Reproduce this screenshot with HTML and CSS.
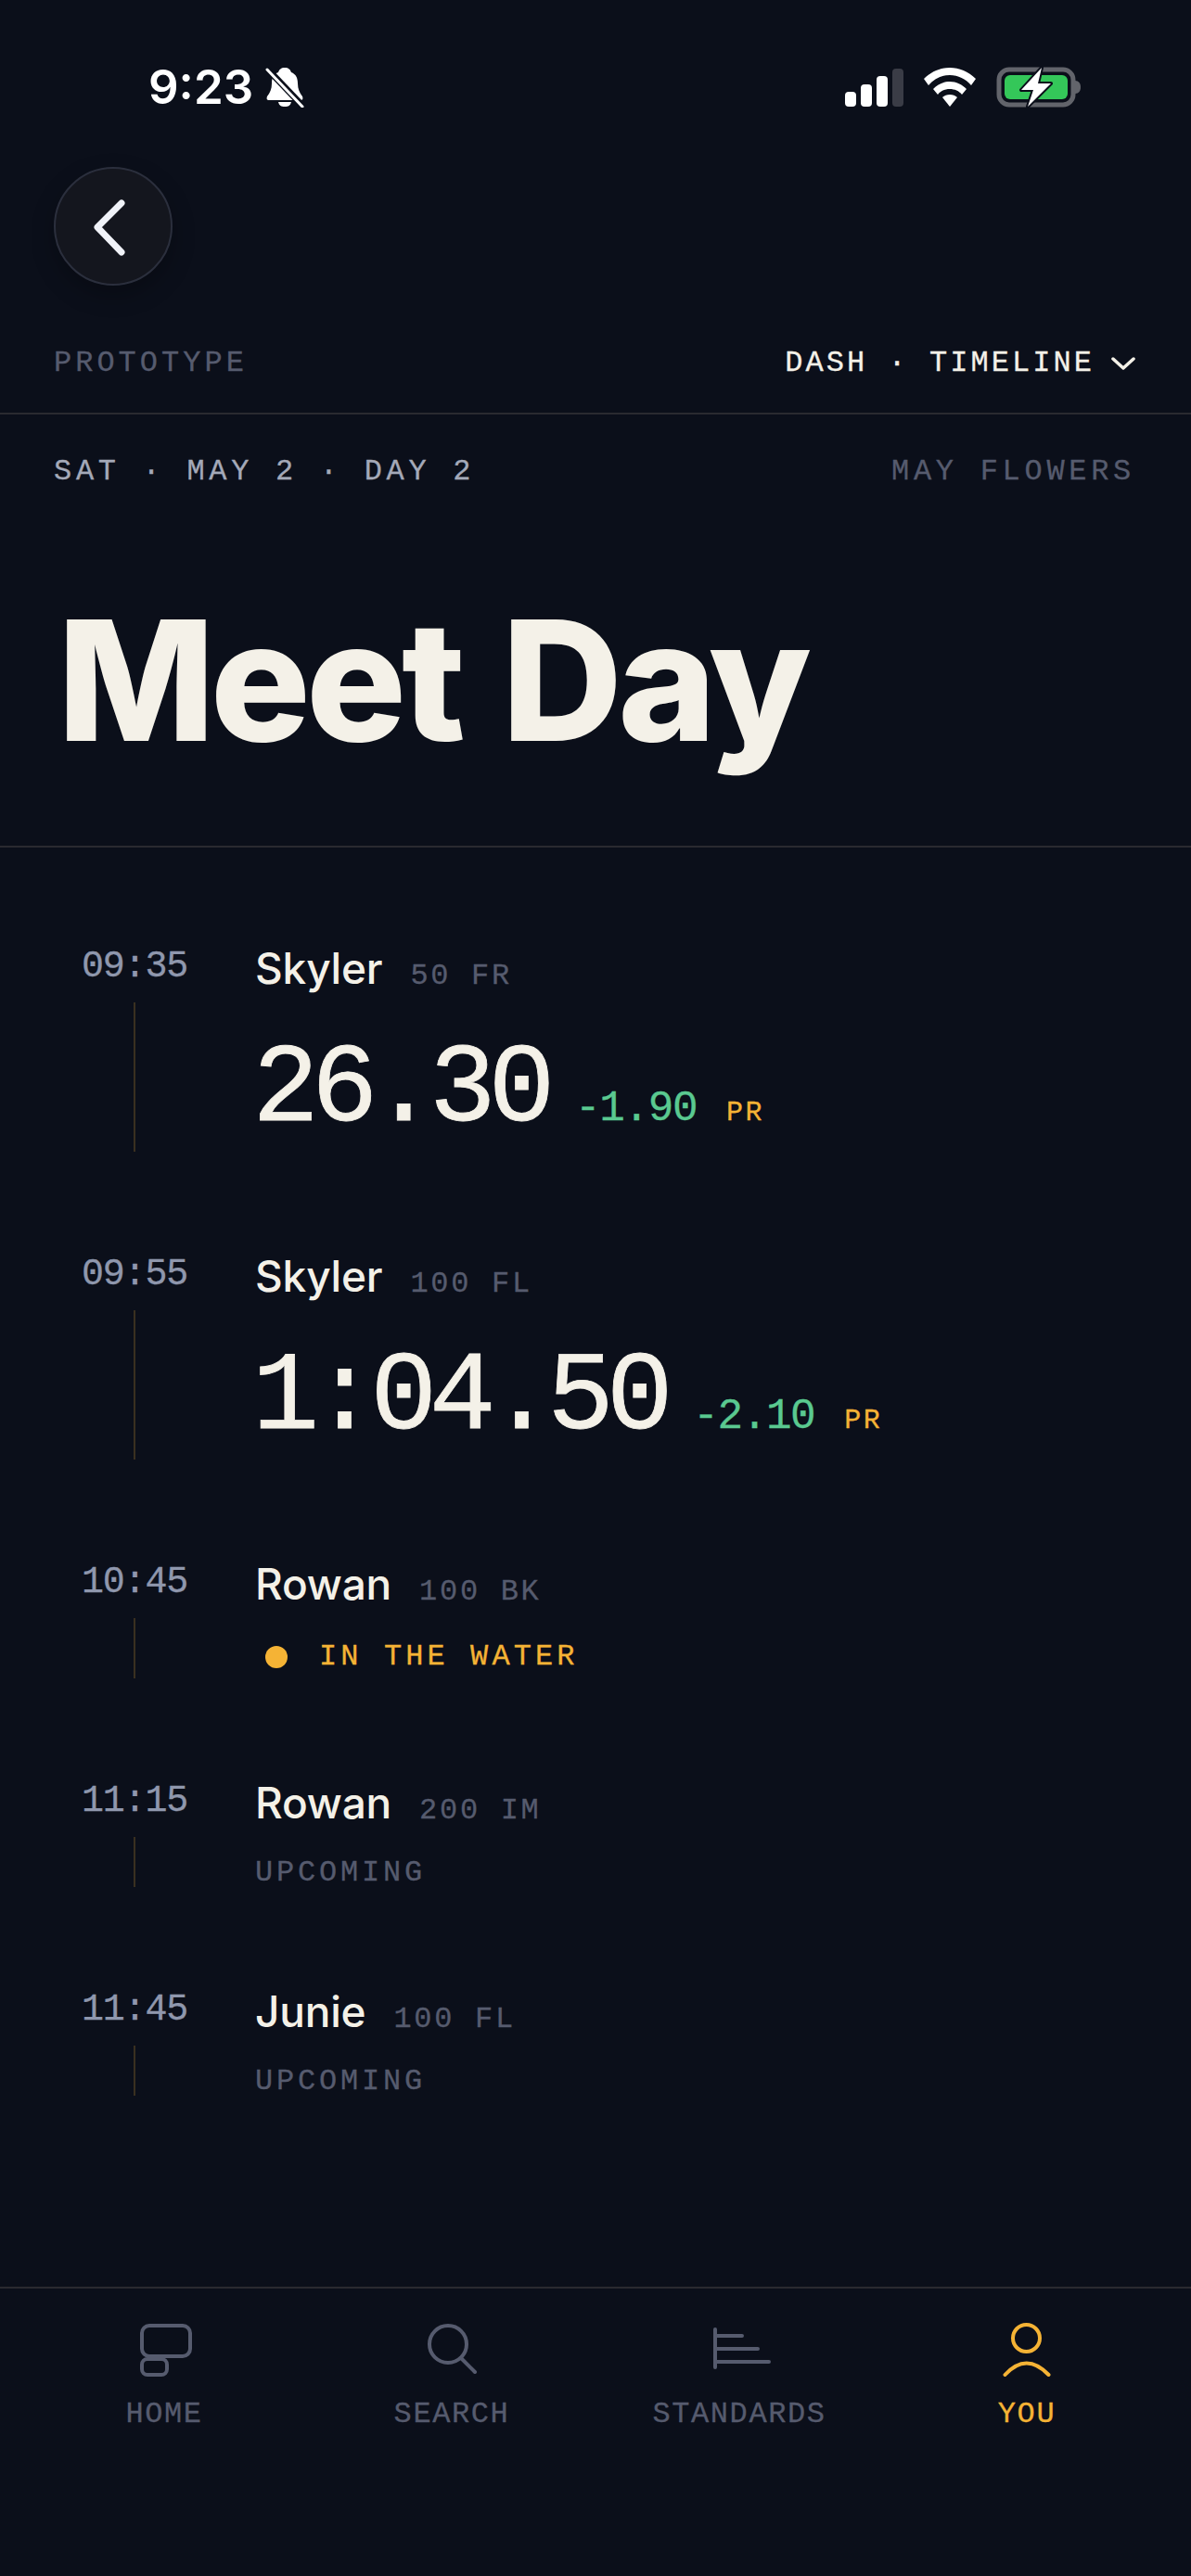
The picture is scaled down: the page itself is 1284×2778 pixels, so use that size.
FILE: index.html
```html
<!DOCTYPE html>
<html lang="en">
<head>
<meta charset="utf-8">
<title>Meet Day</title>
<link rel="stylesheet" href="styles.css">
</head>
<body>
<div class="app">
  <div class="status">
    <div class="status-left">
      <span class="clock">9:23</span>
      <svg class="bell" width="42" height="44" viewBox="0 0 42 44"><path class="white" d="M21 1c4 0 6 2 7 5 5 2 7 6 7 12 0 6 2 10 5 14 1 3 0 4-2 4H4c-2 0-3-1-2-4 3-4 5-8 5-14 0-6 2-10 7-12 1-3 3-5 7-5z"/><path class="white" d="M14 38h14c-1 4-3 5-7 5s-6-1-7-5z"/><path class="bell-cut" d="M1 1l40 42"/><path class="bell-slash" d="M2 3l38 40"/></svg>
    </div>
    <div class="status-right">
      <div class="signal">
        <span class="bar b1"></span><span class="bar b2"></span><span class="bar b3"></span><span class="bar b4"></span>
      </div>
      <svg class="wifi" width="56" height="42" viewBox="0 0 56 42"><path class="white" d="M28 0c10 0 20 4 28 12l-5 7C45 12 37 8 28 8S11 12 5 19l-5-7C8 4 18 0 28 0z"/><path class="white" d="M28 15c7 0 13 3 18 8l-5 6c-3-4-8-6-13-6s-10 2-13 6l-5-6c5-5 11-8 18-8z"/><path class="white" d="M28 29c3 0 6 1 8 3L28 42 20 32c2-2 5-3 8-3z"/></svg>
      <svg class="battery" width="92" height="44" viewBox="0 0 92 44"><rect class="bat-frame" x="3" y="3" width="80" height="38" rx="11"/><rect class="bat-fill" x="9" y="9" width="68" height="26" rx="6"/><path class="bat-nub" d="M85 15c4 0 6 3 6 7s-2 7-6 7z"/><path class="bat-bolt" d="M49 1L27 25h13l-6 18 25-25H45z"/></svg>
    </div>
  </div>

  <button class="back" type="button" aria-label="Back">
    <svg width="40" height="64" viewBox="0 0 40 64"><path d="M33 7L7 33l26 27" /></svg>
  </button>

  <div class="topbar">
    <span class="proto">PROTOTYPE</span>
    <span class="crumb"><span>DASH · TIMELINE</span><svg width="26" height="14" viewBox="0 0 26 14"><path d="M2 2l11 10L24 2"/></svg></span>
  </div>

  <header class="hero">
    <div class="dateline">
      <span class="date">SAT · MAY 2 · DAY 2</span>
      <span class="meet-name">MAY FLOWERS</span>
    </div>
    <h1 class="title">Meet Day</h1>
  </header>

  <main class="timeline">
    <article class="row">
      <div class="when"><span class="time">09:35</span><span class="line"></span></div>
      <div class="body">
        <div class="who"><span class="name">Skyler</span><span class="event">50 FR</span></div>
        <div class="result"><span class="mark">26.30</span><span class="delta">-1.90</span><span class="pr">PR</span></div>
      </div>
    </article>
    <article class="row">
      <div class="when"><span class="time">09:55</span><span class="line"></span></div>
      <div class="body">
        <div class="who"><span class="name">Skyler</span><span class="event">100 FL</span></div>
        <div class="result"><span class="mark">1:04.50</span><span class="delta">-2.10</span><span class="pr">PR</span></div>
      </div>
    </article>
    <article class="row">
      <div class="when"><span class="time">10:45</span><span class="line"></span></div>
      <div class="body">
        <div class="who"><span class="name">Rowan</span><span class="event">100 BK</span></div>
        <div class="live"><span class="dot"></span>IN THE WATER</div>
      </div>
    </article>
    <article class="row">
      <div class="when"><span class="time">11:15</span><span class="line"></span></div>
      <div class="body">
        <div class="who"><span class="name">Rowan</span><span class="event">200 IM</span></div>
        <div class="upcoming">UPCOMING</div>
      </div>
    </article>
    <article class="row">
      <div class="when"><span class="time">11:45</span><span class="line"></span></div>
      <div class="body">
        <div class="who"><span class="name">Junie</span><span class="event">100 FL</span></div>
        <div class="upcoming">UPCOMING</div>
      </div>
    </article>
  </main>

  <nav class="tabs">
    <div class="tab">
      <svg width="72" height="60" viewBox="0 0 72 60"><rect x="12" y="5" width="52" height="33" rx="8"/><rect x="12" y="41" width="27" height="17" rx="6"/></svg>
      <span>HOME</span>
    </div>
    <div class="tab">
      <svg width="72" height="60" viewBox="0 0 72 60"><circle cx="32" cy="25" r="20"/><path d="M46 40l15 15"/></svg>
      <span>SEARCH</span>
    </div>
    <div class="tab">
      <svg width="72" height="60" viewBox="0 0 72 60"><path d="M10 9v41M10 16h29M10 30h46M10 44h58"/></svg>
      <span>STANDARDS</span>
    </div>
    <div class="tab">
      <svg class="you" width="72" height="60" viewBox="0 0 72 60"><circle cx="35.500" cy="18.500" r="14.500"/><path d="M12.500 58Q35.500 33 59.500 58"/></svg>
      <span class="you-label">YOU</span>
    </div>
  </nav>
</div>
</body>
</html>
```
FILE: styles.css
```css
* { box-sizing: border-box; }
html, body { margin: 0; padding: 0; background: #0b0f1a; }
.app {
  width: 1284px;
  height: 2778px;
  display: flex;
  flex-direction: column;
  background: #0b0f1a;
  color: #f4f1e8;
  font-family: "Liberation Mono", monospace;
  font-variant-numeric: slashed-zero;
  overflow: hidden;
}
.status {
  display: flex;
  justify-content: space-between;
  align-items: center;
  height: 44px;
  margin-top: 72px;
  padding: 0 118px 0 160px;
}
.status-left { display: flex; align-items: center; gap: 13px; }
.clock {
  font-family: "Inter", sans-serif;
  font-weight: 600;
  font-size: 51px;
  line-height: 44px;
  color: #fff;
}
.bell, .wifi, .battery { display: block; }
.white { fill: #fff; }
.bell-cut { stroke: #0b0f1a; stroke-width: 7; fill: none; }
.bell-slash { stroke: #fff; stroke-width: 3; stroke-linecap: round; fill: none; }
.status-right { display: flex; align-items: center; gap: 22px; }
.signal { display: flex; align-items: flex-end; gap: 5px; height: 42px; }
.bar { width: 12px; background: #fff; border-radius: 4px; }
.b1 { height: 16px; }
.b2 { height: 24px; }
.b3 { height: 33px; }
.b4 { height: 41px; background: #3a3c46; }
.bat-frame { fill: none; stroke: #62646b; stroke-width: 5; }
.bat-fill { fill: #34c759; }
.bat-nub { fill: #62646b; }
.bat-bolt { fill: #fff; stroke: #0b0f1a; stroke-width: 4; paint-order: stroke; stroke-linejoin: round; }

.back {
  width: 128px;
  height: 128px;
  margin: 64px 0 0 58px;
  padding: 0;
  display: flex;
  align-items: center;
  justify-content: center;
  background: #14161e;
  border: 2px solid #2b2f3d;
  border-radius: 50%;
  box-shadow: 0 10px 24px rgba(0, 0, 0, 0.25);
}
.back svg { fill: none; stroke: #f0f2f8; stroke-width: 7; stroke-linecap: round; stroke-linejoin: round; margin-right: 8px; }

.topbar {
  display: flex;
  justify-content: space-between;
  align-items: center;
  height: 139px;
  padding: 30px 60px 0 58px;
  border-bottom: 2px solid #2a2a30;
  font-size: 32px;
  line-height: 36px;
}
.proto { color: #565b6e; letter-spacing: 4px; }
.crumb { display: flex; align-items: center; gap: 18px; letter-spacing: 3.050px; color: #f4f1e8; }
.crumb svg { fill: none; stroke: #f4f1e8; stroke-width: 3.500; stroke-linecap: round; stroke-linejoin: round; }

.hero {
  height: 467px;
  padding: 0 60px 0 58px;
  border-bottom: 2px solid #2a2a30;
}
.dateline {
  display: flex;
  justify-content: space-between;
  padding-top: 44px;
  font-size: 32px;
  line-height: 36px;
  letter-spacing: 4.700px;
}
.date { color: #a4a9b8; }
.meet-name { color: #565b6e; }
.title {
  margin: 112px 0 0 4px;
  font-family: "Inter", sans-serif;
  font-weight: 800;
  font-size: 180px;
  line-height: 190px;
  letter-spacing: -5px;
  word-spacing: 10px;
  color: #f4f1e8;
  white-space: nowrap;
}
.proto, .crumb, .dateline, .time, .event, .delta, .pr, .live, .upcoming, .tab { -webkit-text-stroke: 0.3px; }

.timeline {
  flex: 1;
  display: flex;
  flex-direction: column;
  gap: 107px;
  padding: 103px 0 0 88px;
}
.row { display: flex; gap: 73px; }
.when {
  width: 114px;
  display: flex;
  flex-direction: column;
  align-items: center;
}
.time {
  padding-top: 3px;
  font-size: 40px;
  line-height: 46px;
  letter-spacing: -1.200px;
  color: #8f97ad;
  white-space: nowrap;
}
.line { flex: 1; width: 2px; margin-top: 15px; background: #3a3020; }
.body { display: flex; flex-direction: column; }
.who { display: flex; align-items: baseline; gap: 30px; height: 60px; }
.name {
  font-family: "Inter", sans-serif;
  font-weight: 500;
  font-size: 46px;
  line-height: 54px;
  letter-spacing: -0.200px;
  color: #f4f1e8;
}
.event { font-size: 32px; letter-spacing: 2.700px; color: #565b6e; }
.result { display: flex; align-items: baseline; height: 165px; padding-top: 33px; }
.mark {
  margin-left: -3px;
  font-size: 120px;
  line-height: 132px;
  letter-spacing: -8.400px;
  -webkit-text-stroke: 0.800px;
  color: #f4f1e8;
}
.delta { margin-left: 30px; font-size: 46px; letter-spacing: -1.400px; color: #5ac990; }
.pr { margin-left: 32px; font-size: 30px; letter-spacing: 2.400px; color: #f5b335; }
.live {
  display: flex;
  align-items: center;
  gap: 34px;
  height: 69px;
  padding: 22px 0 0 11px;
  font-size: 32px;
  letter-spacing: 4.100px;
  color: #f5b335;
}
.dot { width: 24px; height: 24px; border-radius: 50%; background: #f5b335; }
.upcoming {
  height: 58px;
  padding-top: 28px;
  font-size: 32px;
  line-height: 30px;
  letter-spacing: 3.800px;
  color: #565b6e;
}

.tabs {
  height: 312px;
  display: grid;
  grid-template-columns: repeat(4, 1fr);
  padding: 35px 22px 0;
  border-top: 2px solid #2a2a30;
}
.tab {
  display: flex;
  flex-direction: column;
  align-items: center;
  gap: 23px;
  font-size: 32px;
  line-height: 36px;
  letter-spacing: 1.600px;
  color: #565b6e;
}
.tab svg { fill: none; stroke: #565b6e; stroke-width: 4; stroke-linecap: round; }
.tab svg.you { stroke: #f5b335; }
.you-label { color: #f5b335; }
```
